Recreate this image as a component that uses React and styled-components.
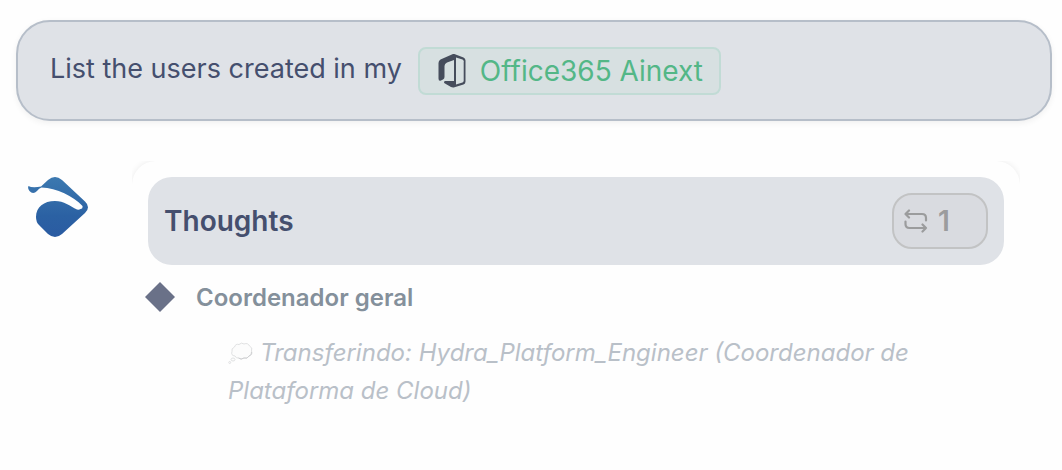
import React from 'react'
import styled, { createGlobalStyle } from 'styled-components'

const GlobalStyle = createGlobalStyle`
  *, *::before, *::after { box-sizing: border-box; }
  body { margin: 0; background: #fefefe; color: #454f6e; font-family: Inter, "Noto Sans", sans-serif; }
`
const Page = styled.main`
  min-height: 100vh; display: flex; flex-direction: column; gap: 40px; padding: 20px 10px 0 16px;
`
const UserMessage = styled.div`
  display: flex; align-items: flex-start; gap: 16px; padding: 25px 32px 24px; background: #dfe2e7; border: 2px solid #b6bec9; border-radius: 34px; box-shadow: 0 2px 6px rgba(0, 0, 0, .06);
`
const MessageText = styled.p`
  margin: 0; font-size: 27px; line-height: 44px;
`
const Chip = styled.span`
  display: inline-flex; align-items: center; gap: 14px; height: 48px; padding: 0 16px 0 18px; border: 2px solid #c1dbd5; border-radius: 8px; background: #d7e0e1; color: #53b787; font-size: 28px; line-height: 44px; white-space: nowrap;
`
const Reply = styled.section`
  flex: 1; display: flex; gap: 44px; padding: 0 32px 0 12px;
`
const Avatar = styled.svg`
  flex: none; width: 60px; height: 60px; margin-top: 16px;
`
const Clip = styled.div`
  flex: 1; min-width: 0; display: flex; overflow: hidden;
`
const Panel = styled.div`
  flex: 1; min-width: 0; padding: 16px; background: #fefefe; border-radius: 24px 24px 0 0; box-shadow: 0 0 6px rgba(0, 0, 0, .08);
`
const Header = styled.header`
  display: flex; align-items: center; justify-content: space-between; height: 88px; padding: 0 16px; border-radius: 24px; background: #dfe2e7;
`
const Title = styled.h2`
  margin: 0; font-size: 28px; line-height: 44px; font-weight: 600;
`
const Count = styled.button`
  display: flex; align-items: center; gap: 10px; width: 96px; height: 56px; padding: 0 10px; border: 2px solid #c2c3c4; border-radius: 20px; background: #d9dbe0; color: #9b9c9d; font: 600 28px/44px Inter, sans-serif;
`
const Agent = styled.div`
  display: flex; align-items: center; gap: 20px; margin: 14px 0 17px -4px; color: #84909b;
`
const AgentName = styled.h3`
  margin: 0; font-size: 24px; line-height: 38px; font-weight: 600;
`
const Thought = styled.p`
  margin: 0; padding-left: 80px; color: #b9c0c8; font-size: 24px; line-height: 38px; font-style: oblique 10deg;
`
const Cloud = styled.svg`
  width: 26px; height: 24px; margin-right: 6px; vertical-align: -4px;
`

function OfficeIcon() {
  return (
    <svg width="28" height="34" viewBox="0 0 28 34" aria-hidden="true">
      <path fill="#464d5c" d="M15 0 2.500 5.500Q.5 6.500.5 9v15.500Q.5 27.500 3 26.500L5 25.500Q6.500 24.800 6.500 23V12Q6.500 9.500 9 8.500L16 6V27H7q-2 1.200 0 2.500l6 3.500q1.500.8 3.500.3l9-2.800q2-.7 2-3V6.500q0-2.200-2-3L17 .2Q16-.2 15 0Z" />
      <path fill="#d7e0e1" d="m18 3.500 6.500 2q1.200.4 1.200 1.800v19.400q0 1.300-1.200 1.700l-6.500 2Z" />
    </svg>
  )
}

function Logo() {
  return (
    <Avatar viewBox="0 0 60 60" role="img" aria-label="Assistant">
      <defs>
        <linearGradient id="logo" x1="0" y1="0" x2="0" y2="60" gradientUnits="userSpaceOnUse">
          <stop offset="0" stopColor="#3c79b0" />
          <stop offset=".65" stopColor="#2b61a3" />
          <stop offset="1" stopColor="#2a5ba2" />
        </linearGradient>
      </defs>
      <path fill="url(#logo)" d="M0 9.500Q1 9 3 10Q8 10.500 13 9.500L20 3Q27-3 34 3L57 24.500Q63 30 57 36L34 57Q27 63 20 57L11 48Q8 45 8 40C8 30 16 24 27 24C36 24 42 29 49 32.500Q51 33 52.500 32Q55 32 54.500 29C45 19 29 11 13.500 10.500Q11 11 9 14Q5 18 1.500 14Q0 13 0 9.500Z" />
    </Avatar>
  )
}

function RepeatIcon() {
  return (
    <svg width="24" height="24" viewBox="0 0 24 24" fill="none" stroke="currentColor" strokeWidth="2.2" strokeLinecap="round" strokeLinejoin="round" aria-hidden="true">
      <path d="M5 1.500 1.500 5 5 8.500M1.500 5H18q4 0 4 4v2.500M18.500 22.500 22 19l-3.500-3.500M22 19H5.500q-4 0-4-4v-2.500" />
    </svg>
  )
}

function Diamond() {
  return (
    <svg width="32" height="32" viewBox="0 0 32 32" aria-hidden="true">
      <path fill="#6a7188" d="m16 0 15 15-15 15L1 15Z" />
    </svg>
  )
}

function ThoughtCloud() {
  return (
    <Cloud viewBox="0 0 26 24" aria-hidden="true">
      <g fill="#fcfcfc" stroke="#e0e1e2" strokeWidth="1">
        <path d="M7 15Q2.500 14.500 4 10.500Q3 7.500 6.500 6Q7.500 2.500 11 3.500Q13.500 1 16 3Q20 1.500 21.500 5Q25 6.500 23.500 10Q25 14 21 15Q19.500 18.500 16 17Q13 19.500 10.500 17Q8 17.500 7 15Z" />
        <ellipse cx="5" cy="18.500" rx="2" ry="1.500" />
        <circle cx="1.700" cy="21.500" r="1" />
      </g>
      <path fill="none" stroke="#cfd0d2" strokeWidth="1" d="M10.500 17Q13 19 16 17Q19.500 18 21 15Q24 14 23.500 11" />
    </Cloud>
  )
}

export default function App() {
  return (
    <>
      <GlobalStyle />
      <Page>
        <UserMessage>
          <MessageText>List the users created in my</MessageText>
          <Chip><OfficeIcon />Office365 Ainext</Chip>
        </UserMessage>
        <Reply>
          <Logo />
          <Clip>
            <Panel>
              <Header>
                <Title>Thoughts</Title>
                <Count type="button"><RepeatIcon />1</Count>
              </Header>
              <Agent>
                <Diamond />
                <AgentName>Coordenador geral</AgentName>
              </Agent>
              <Thought>
                <ThoughtCloud />
                Transferindo: Hydra_Platform_Engineer (Coordenador de Plataforma de Cloud)
              </Thought>
            </Panel>
          </Clip>
        </Reply>
      </Page>
    </>
  )
}
